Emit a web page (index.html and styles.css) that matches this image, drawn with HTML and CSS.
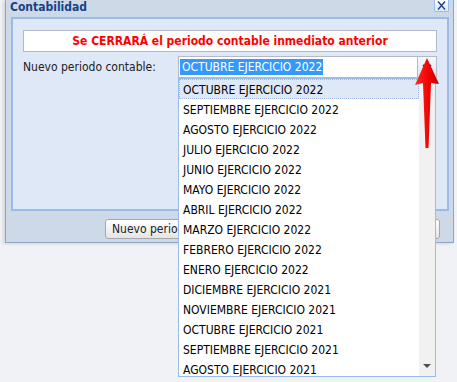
FILE: index.html
```html
<!DOCTYPE html>
<html lang="es">
<head>
    <meta charset="UTF-8">
    <title>Contabilidad</title>
    <link rel="stylesheet" href="styles.css">
</head>
<body>

<div class="ventana">
    <!-- Cabecera -->
    <div class="cabecera">
        <span class="titulo">Contabilidad</span>
        <span class="cerrar">
            <svg width="13" height="11" viewBox="0 0 13 11"><path d="M3 1.5 L10 9.5 M10 1.5 L3 9.5" stroke="#15428b" stroke-width="1.4" fill="none"/></svg>
        </span>
    </div>

    <!-- Panel principal -->
    <div class="panel">
        <div class="aviso">Se CERRARÁ el periodo contable inmediato anterior</div>
        <div class="fila">
            <label class="etiqueta">Nuevo periodo contable:</label>
            <div class="combo">
                <div class="combo-texto"><span class="seleccion">OCTUBRE EJERCICIO 2022</span></div>
                <div class="combo-boton">
                    <svg width="10" height="6" viewBox="0 0 10 6"><path d="M1 1 L5 4.5 L9 1" stroke="#15428b" stroke-width="2" fill="none"/></svg>
                </div>
            </div>
        </div>
    </div>

    <!-- Botones -->
    <div class="acciones">
        <button class="btn">Nuevo periodo contable</button>
        <button class="btn btn-cancelar">Cancelar</button>
    </div>
</div>

<!-- Lista desplegable -->
<div class="lista">
    <div class="opciones">
        <div class="opcion activa">OCTUBRE EJERCICIO 2022</div>
        <div class="opcion">SEPTIEMBRE EJERCICIO 2022</div>
        <div class="opcion">AGOSTO EJERCICIO 2022</div>
        <div class="opcion">JULIO EJERCICIO 2022</div>
        <div class="opcion">JUNIO EJERCICIO 2022</div>
        <div class="opcion">MAYO EJERCICIO 2022</div>
        <div class="opcion">ABRIL EJERCICIO 2022</div>
        <div class="opcion">MARZO EJERCICIO 2022</div>
        <div class="opcion">FEBRERO EJERCICIO 2022</div>
        <div class="opcion">ENERO EJERCICIO 2022</div>
        <div class="opcion">DICIEMBRE EJERCICIO 2021</div>
        <div class="opcion">NOVIEMBRE EJERCICIO 2021</div>
        <div class="opcion">OCTUBRE EJERCICIO 2021</div>
        <div class="opcion">SEPTIEMBRE EJERCICIO 2021</div>
        <div class="opcion">AGOSTO EJERCICIO 2021</div>
    </div>
    <div class="scroll">
        <span class="flecha-abajo"></span>
    </div>
</div>

<!-- Flecha roja -->
<svg class="flecha-roja" width="30" height="95" viewBox="0 0 30 95">
    <defs>
        <linearGradient id="rojo" x1="0" y1="0" x2="1" y2="0">
            <stop offset="0" stop-color="#ff2a2a"/>
            <stop offset="0.6" stop-color="#f00000"/>
            <stop offset="1" stop-color="#c00000"/>
        </linearGradient>
    </defs>
    <path d="M15 1 L27 27 L19 26 L16.5 91 L13.5 91 L11 26 L3 28 Z" fill="url(#rojo)"/>
</svg>

</body>
</html>
```

FILE: styles.css
```css
body {
    margin: 0;
    background: #f1f2f6;
    font-family: "DejaVu Sans Condensed", "DejaVu Sans", sans-serif;
    font-size: 12px;
    color: #000;
    width: 457px;
    height: 382px;
    overflow: hidden;
    position: relative;
}

.ventana {
    margin-left: 5px;
    width: 447px;
    height: 242px;
    background: #ced9e7;
    border: 1px solid #8da4c4;
    border-top: none;
    box-shadow: -2px 1px 3px rgba(0, 0, 0, 0.12);
}

.cabecera {
    display: flex;
    height: 17px;
    padding-left: 4px;
}

.titulo {
    font-weight: bold;
    color: #15428b;
    font-size: 12px;
    line-height: 14px;
}

.cerrar {
    margin-left: auto;
    margin-right: 4px;
    width: 13px;
    height: 11px;
    border: 1px solid #99bbe8;
    border-top: none;
    border-radius: 0 0 2px 2px;
    background: linear-gradient(#ffffff, #dde7f5);
    display: flex;
}

.panel {
    margin: 0 4px 0 5px;
    height: 179px;
    border: 2px solid #99bbe8;
    background: #dfe8f6;
    padding: 11px 10px 0 10px;
}

.aviso {
    height: 20px;
    border: 1px solid #b5b8c8;
    background: #fff;
    color: #f00;
    font-weight: bold;
    font-size: 12px;
    line-height: 20px;
    text-align: center;
}

.fila {
    display: flex;
    align-items: center;
    margin-top: 4px;
    height: 22px;
}

.etiqueta {
    width: 155px;
    color: #222;
}

.combo {
    display: flex;
    width: 259px;
    height: 22px;
}

.combo-texto {
    flex: 1;
    border: 1px solid #b5b8c8;
    border-right: none;
    background: #fff;
    padding: 2px 1px;
}

.seleccion {
    display: inline-block;
    background: #3399ff;
    color: #fff;
    line-height: 16px;
    padding: 0 1px 0 2px;
}

.combo-boton {
    width: 18px;
    border: 1px solid #b5b8c8;
    background: linear-gradient(#f6f9fd, #dae5f3);
    display: flex;
    align-items: center;
    justify-content: center;
}

.acciones {
    display: flex;
    padding: 8px 13px 0 99px;
}

.btn {
    height: 20px;
    padding: 0 6px;
    font-family: inherit;
    font-size: 12px;
    color: #222;
    border: 1px solid #a7a7a7;
    border-radius: 3px;
    background: linear-gradient(#ffffff, #e4e4e4);
}

.btn-cancelar {
    margin-left: auto;
}

.lista {
    position: absolute;
    left: 178px;
    top: 78px;
    width: 256px;
    height: 297px;
    border: 1px solid #99bbe8;
    background: #fff;
    display: flex;
    overflow: hidden;
}

.opciones {
    flex: 1;
}

.opcion {
    height: 20px;
    line-height: 20px;
    padding-left: 3px;
    white-space: nowrap;
    border: 1px solid transparent;
    box-sizing: border-box;
}

.opcion.activa {
    background: #dfe8f6;
    border: 1px dotted #a3bae9;
}

.scroll {
    width: 16px;
    background: #f1f1f1;
    position: relative;
}

.flecha-abajo {
    position: absolute;
    left: 4px;
    bottom: 8px;
    border-left: 4px solid transparent;
    border-right: 4px solid transparent;
    border-top: 4px solid #505050;
}

.flecha-roja {
    position: absolute;
    left: 412px;
    top: 57px;
}
```
